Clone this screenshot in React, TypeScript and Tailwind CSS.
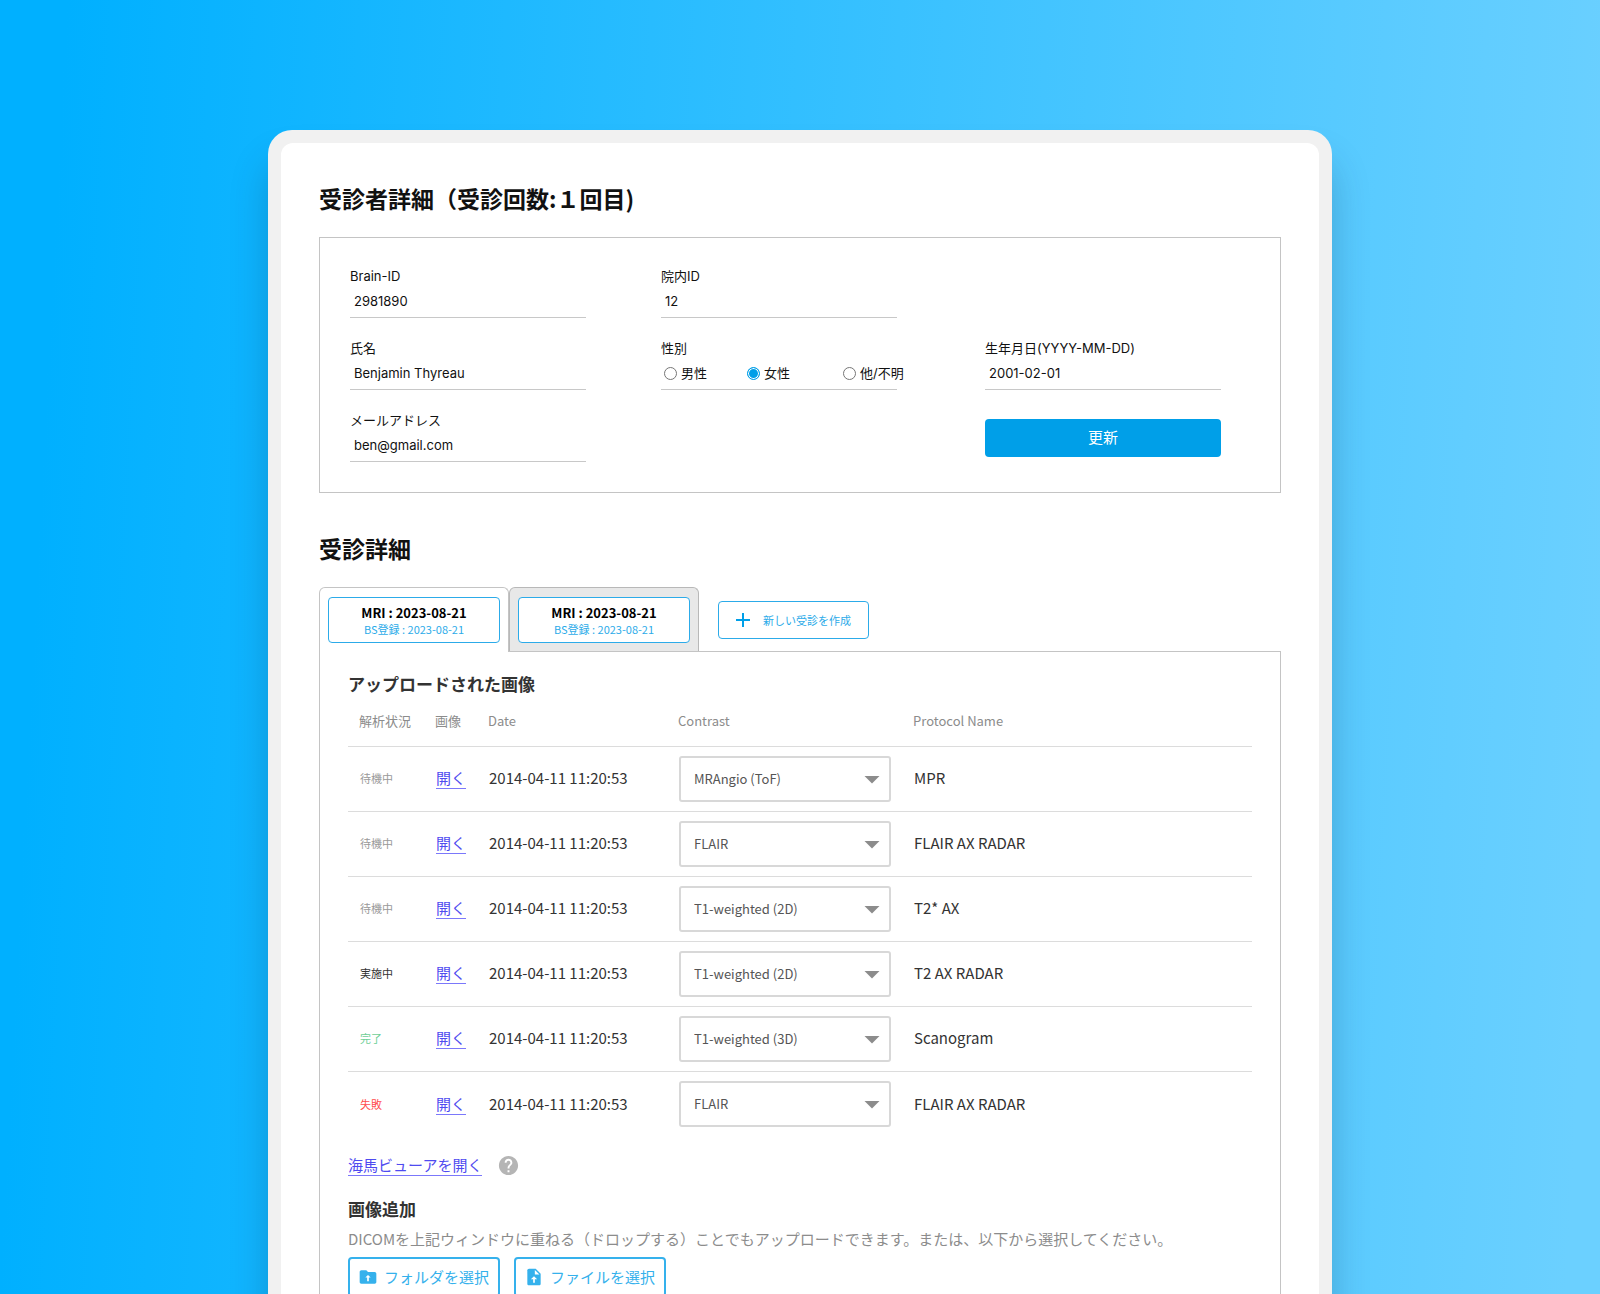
import { FunctionComponent, useId } from "react";
import { MdAdd, MdArrowDropDown, MdHelp } from "react-icons/md";

type Row = {
  status: string;
  statusClass: string;
  contrast: string;
  protocol: string;
};

const rows: Row[] = [
  { status: "待機中", statusClass: "text-[#999]", contrast: "MRAngio (ToF)", protocol: "MPR" },
  { status: "待機中", statusClass: "text-[#999]", contrast: "FLAIR", protocol: "FLAIR AX RADAR" },
  { status: "待機中", statusClass: "text-[#999]", contrast: "T1-weighted (2D)", protocol: "T2* AX" },
  { status: "実施中", statusClass: "text-[#333]", contrast: "T1-weighted (2D)", protocol: "T2 AX RADAR" },
  { status: "完了", statusClass: "text-[#6fcf97]", contrast: "T1-weighted (3D)", protocol: "Scanogram" },
  { status: "失敗", statusClass: "text-[#ff4d4d]", contrast: "FLAIR", protocol: "FLAIR AX RADAR" },
];

const contrasts = ["MRAngio (ToF)", "FLAIR", "T1-weighted (2D)", "T1-weighted (3D)"];

const genders = [
  { label: "男性", className: "w-[83px]" },
  { label: "女性", className: "w-24" },
  { label: "他/不明", className: "" },
];

const FolderUploadIcon: FunctionComponent = () => (
  <svg viewBox="0 0 24 24" className="size-5" aria-hidden="true">
    <path
      fill="currentColor"
      d="M20 6h-8l-2-2H4c-1.1 0-2 .9-2 2v12c0 1.1.9 2 2 2h16c1.1 0 2-.9 2-2V8c0-1.1-.9-2-2-2z"
    />
    <path fill="#fff" d="M12 9.5l-3.2 3.2h2.2V17h2v-4.3h2.2z" />
  </svg>
);

const FileUploadIcon: FunctionComponent = () => (
  <svg viewBox="0 0 24 24" className="size-5" aria-hidden="true">
    <path
      fill="currentColor"
      d="M14 2H6c-1.1 0-2 .9-2 2v16c0 1.1.9 2 2 2h12c1.1 0 2-.9 2-2V8l-6-6z"
    />
    <path fill="#fff" d="M13 3.5V9h5.5zM12 11l-3.8 3.8h2.8V19h2v-4.2h2.8z" />
  </svg>
);

const Field: FunctionComponent<{ label: string; value: string; className?: string }> = ({
  label,
  value,
  className = "",
}) => {
  const id = useId();
  return (
    <div className={`flex w-[236px] flex-col ${className}`}>
      <label htmlFor={id} className="h-5 leading-5">
        {label}
      </label>
      <input
        id={id}
        defaultValue={value}
        className="mt-1 h-7 w-full border-b border-[#c8c8c8] bg-transparent px-1 pb-1.5 outline-none"
      />
    </div>
  );
};

const GenderField: FunctionComponent = () => (
  <fieldset className="flex w-[236px] min-w-0 flex-col">
    <legend className="h-5 leading-5">性別</legend>
    <div className="mt-1 flex h-7 items-center border-b border-[#c8c8c8] pb-1 pl-[3px] whitespace-nowrap">
      {genders.map((g) => (
        <label key={g.label} className={`flex shrink-0 items-center gap-1 ${g.className}`}>
          <input
            type="radio"
            name="gender"
            defaultChecked={g.label === "女性"}
            className="m-0 size-[13px] appearance-none rounded-full border border-[#767676] bg-white checked:border-[#009fe8] checked:bg-[#009fe8] checked:shadow-[inset_0_0_0_1px_white]"
          />
          {g.label}
        </label>
      ))}
    </div>
  </fieldset>
);

const VisitTab: FunctionComponent<{ active?: boolean }> = ({ active }) => (
  <div
    className={
      active
        ? "-mb-px w-[190px] rounded-t-md border border-b-0 border-[#c4c4c4] bg-white px-2 pt-[9px] pb-2"
        : "w-[190px] rounded-t-md border border-b-0 border-[#b8b8b8] bg-[#e8e8e8] px-2 pt-[9px] pb-2"
    }
  >
    <button className="flex h-[46px] w-full flex-col items-center justify-center rounded border border-[#2cabe9] bg-white">
      <span className="text-[13px] leading-[17px] font-bold text-black">MRI : 2023-08-21</span>
      <span className="text-[11px] leading-4 text-[#2cabe9]">BS登録 : 2023-08-21</span>
    </button>
  </div>
);

const ImageTable: FunctionComponent = () => (
  <table className="w-full table-fixed border-collapse text-left">
    <thead>
      <tr className="h-[50px] border-b border-[#dcdcdc] align-middle text-[13px] text-[#8c8c8c]">
        <th className="w-[87px] pl-[11px] font-normal">解析状況</th>
        <th className="w-[53px] font-normal">画像</th>
        <th className="w-[190px] font-normal">Date</th>
        <th className="w-[235px] font-normal">Contrast</th>
        <th className="font-normal">Protocol Name</th>
      </tr>
    </thead>
    <tbody>
      {rows.map((row, i) => (
        <tr key={i} className="h-[65px] border-b border-[#dcdcdc] text-[15px] text-[#333] last:border-0">
          <td className={`pl-3 text-[11px] ${row.statusClass}`}>{row.status}</td>
          <td className="pl-px">
            <a href="#viewer" className="border-b border-[#7b78fb] text-[#4f4bf0]">
              開く
            </a>
          </td>
          <td className="pl-px">2014-04-11 11:20:53</td>
          <td className="pl-px">
            <div className="relative w-[212px]">
              <select
                defaultValue={row.contrast}
                aria-label="Contrast"
                className="block h-[46px] w-full appearance-none rounded-[3px] border-2 border-[#d8d8d8] bg-white px-[13px] text-[13px] text-[#555]"
              >
                {contrasts.map((c) => (
                  <option key={c}>{c}</option>
                ))}
              </select>
              <MdArrowDropDown className="pointer-events-none absolute top-[5px] right-px size-9 text-[#8c8c8c]" />
            </div>
          </td>
          <td className="pl-px">{row.protocol}</td>
        </tr>
      ))}
    </tbody>
  </table>
);

const App: FunctionComponent = () => {
  return (
    <div className="h-screen overflow-hidden bg-[linear-gradient(93deg,#00b0ff_4%,#6bd0ff_98%)] pt-[130px] font-['Noto_Sans_CJK_JP',sans-serif]">
      <main className="mx-auto min-h-full w-[66.5%] rounded-[24px] bg-[#f1f1f1] p-[13px] shadow-[0_32px_36px_rgba(0,50,80,0.25)]">
        <div className="min-h-screen rounded-xl bg-white px-[38px] pt-[39px] pb-10">
          <h1 className="text-[23px] leading-8 font-bold text-[#111]">受診者詳細（受診回数:１回目)</h1>

          <form className="mt-[23px] border border-[#c4c4c4] pt-7 pr-0 pb-[30px] pl-[30px] font-[Inter,'Noto_Sans_CJK_JP',sans-serif] text-[13px] text-[#111]">
            <div className="grid grid-cols-[311fr_324fr_295fr] gap-y-5">
              <Field label="Brain-ID" value="2981890" />
              <Field label="院内ID" value="12" />
              <Field label="氏名" value="Benjamin Thyreau" className="col-start-1" />
              <GenderField />
              <Field label="生年月日(YYYY-MM-DD)" value="2001-02-01" />
              <Field label="メールアドレス" value="ben@gmail.com" />
              <button
                type="button"
                className="col-start-3 mt-[9px] h-[38px] w-[236px] rounded bg-[#009fe8] text-[15px] text-white"
              >
                更新
              </button>
            </div>
          </form>

          <h2 className="mt-[39px] text-[23px] leading-8 font-bold text-[#111]">受診詳細</h2>

          <div className="mt-[23px] flex">
            <VisitTab active />
            <VisitTab />
            <button className="mt-[14px] ml-[19px] flex h-[38px] w-[151px] items-center rounded border border-[#2cabe9] pl-3 text-[11px] text-[#2cabe9]">
              <MdAdd className="mr-2 size-6 text-[#009fe8]" />
              新しい受診を作成
            </button>
          </div>

          <section className="border border-[#c4c4c4] px-7 pt-5 pb-7">
            <h3 className="text-[17px] leading-6 font-bold text-[#333]">アップロードされた画像</h3>
            <ImageTable />

            <div className="mt-[18px] flex items-center gap-[15px]">
              <a href="#hippocampus" className="border-b border-[#7b78fb] text-[15px] leading-5 text-[#4f4bf0]">
                海馬ビューアを開く
              </a>
              <MdHelp className="size-[23px] text-[#b5b5b5]" />
            </div>

            <h3 className="mt-5 text-[17px] leading-6 font-bold text-[#333]">画像追加</h3>
            <p className="mt-1.5 text-[15px] leading-6 text-[#8c8c8c]">
              DICOMを上記ウィンドウに重ねる（ドロップする）ことでもアップロードできます。または、以下から選択してください。
            </p>
            <div className="mt-1.5 flex gap-3.5 text-[15px] text-[#35b1ec]">
              <button className="flex h-10 w-[152px] items-center gap-1.5 rounded border-2 border-[#35b1ec] pl-2">
                <FolderUploadIcon />
                フォルダを選択
              </button>
              <button className="flex h-10 w-[152px] items-center gap-1.5 rounded border-2 border-[#35b1ec] pl-2">
                <FileUploadIcon />
                ファイルを選択
              </button>
            </div>
          </section>
        </div>
      </main>
    </div>
  );
};

export default App;
